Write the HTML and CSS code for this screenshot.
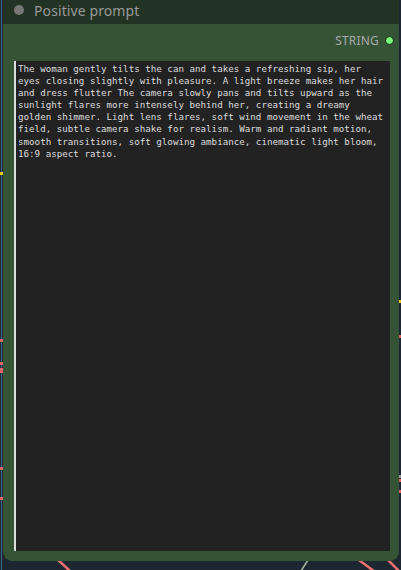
FILE: index.html
```html
<!DOCTYPE html>
<html>
<head>
<meta charset="utf-8">
<link rel="stylesheet" href="styles.css">
</head>
<body>
<svg class="canvas" width="401" height="570" viewBox="0 0 401 570">
  <line x1="1.5" y1="0" x2="1.5" y2="570" stroke="#3b6a8c" stroke-width="1"/>
  <rect x="0" y="172" width="3" height="3" fill="#e8c21a"/>
  <rect x="0" y="339" width="3" height="3" fill="#e06666"/>
  <rect x="0" y="362" width="3" height="3" fill="#e06666"/>
  <rect x="0" y="368" width="3" height="5" fill="#e06666"/>
  <rect x="0" y="467" width="3" height="3" fill="#e06666"/>
  <rect x="0" y="497" width="3" height="3" fill="#e06666"/>
  <rect x="399" y="300" width="2" height="3" fill="#e8c21a"/>
  <rect x="399" y="335" width="2" height="3" fill="#e06666"/>
  <rect x="399" y="479" width="2" height="3" fill="#e06666"/>
  <rect x="399" y="490" width="2" height="3" fill="#e06666"/>
  <rect x="399" y="475" width="2" height="3" fill="#999"/>
  <line x1="56" y1="558" x2="70" y2="571" stroke="#f07070" stroke-width="2.5"/>
  <line x1="356" y1="558" x2="374" y2="571" stroke="#f07070" stroke-width="2.5"/>
  <line x1="386" y1="558" x2="399" y2="571" stroke="#f07070" stroke-width="2.5"/>
  <line x1="308" y1="560" x2="301" y2="571" stroke="#a8b8a0" stroke-width="1.5"/>
</svg>
<div class="node">
  <div class="title">
    <span class="dot"></span>
    <span class="title-text">Positive prompt</span>
  </div>
  <div class="body">
    <div class="output">
      <span class="output-label">STRING</span>
      <span class="slot"></span>
    </div>
    <div class="prompt">The woman gently tilts the can and takes a refreshing sip, her eyes closing slightly with pleasure. A light breeze makes her hair and dress flutter The camera slowly pans and tilts upward as the sunlight flares more intensely behind her, creating a dreamy golden shimmer. Light lens flares, soft wind movement in the wheat field, subtle camera shake for realism. Warm and radiant motion, smooth transitions, soft glowing ambiance, cinematic light bloom, 16:9 aspect ratio.</div>
  </div>
</div>
</body>
</html>
```

FILE: styles.css
```css
html, body {
  margin: 0;
  padding: 0;
}
body {
  width: 401px;
  height: 570px;
  background: #1d2731;
  overflow: hidden;
  position: relative;
  font-family: "Noto Sans", "Liberation Sans", sans-serif;
}
.canvas {
  position: absolute;
  left: 0;
  top: 0;
}
.node {
  position: relative;
  margin-left: 3px;
  width: 396px;
  height: 561px;
  background: #355335;
  border-radius: 0 0 9px 9px;
  display: flex;
  flex-direction: column;
}
.title {
  height: 24px;
  background: #233323;
  display: flex;
  align-items: center;
  gap: 10px;
  padding-left: 11px;
  padding-bottom: 4px;
  box-sizing: border-box;
}
.dot {
  width: 10px;
  height: 10px;
  border-radius: 50%;
  background: #777;
}
.title-text {
  color: #999;
  font-size: 14px;
  letter-spacing: 0.1px;
}
.body {
  flex: 1;
  display: flex;
  flex-direction: column;
  padding: 9px 9px 10px 11px;
}
.output {
  display: flex;
  justify-content: flex-end;
  align-items: center;
  gap: 6px;
  height: 14px;
  padding-right: 0;
}
.output-label {
  color: #aaa;
  font-size: 12px;
  letter-spacing: 0.2px;
}
.slot {
  width: 7px;
  height: 7px;
  border-radius: 50%;
  background: #7f7;
  border: 1px solid #1a1a1a;
  margin-right: -4px;
}
.prompt {
  margin-top: 14px;
  flex: 1;
  background: #222;
  border-left: 2px solid #ddd;
  color: #ddd;
  font-family: "DejaVu Sans Mono", "Liberation Mono", monospace;
  font-size: 9.2px;
  line-height: 12.1px;
  padding: 2px 4px 0 2px;
  margin-right: 0;
  white-space: pre-wrap;
  word-wrap: break-word;
}
```
